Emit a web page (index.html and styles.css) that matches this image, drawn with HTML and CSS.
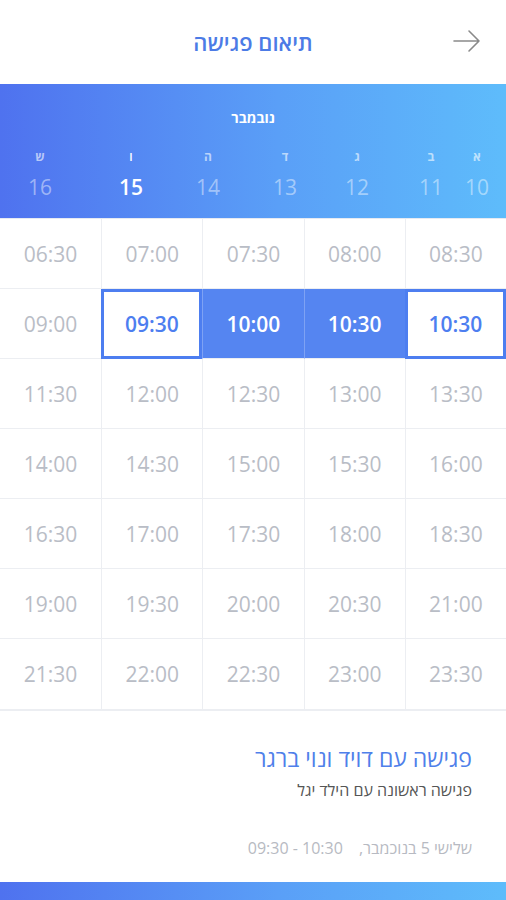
FILE: index.html
```html
<!DOCTYPE html>
<html lang="he" dir="rtl">
<head>
    <meta charset="UTF-8">
    <meta name="viewport" content="width=device-width, initial-scale=1.0">
    <title>תיאום פגישה</title>
    <link rel="stylesheet" href="styles.css">
</head>
<body>
    <div class="screen">
        <header class="top-bar">
            <button class="back-button" aria-label="חזרה">
                <svg width="30" height="24" viewBox="0 0 30 24">
                    <path d="M2 12 H27 M17 2 L27 12 L17 22" fill="none" stroke="#8a8a8a" stroke-width="1.6" stroke-linecap="round" stroke-linejoin="round"></path>
                </svg>
            </button>
            <h1 class="page-title">תיאום פגישה</h1>
            <span></span>
        </header>

        <section class="calendar-head">
            <div class="month">נובמבר</div>
            <div class="days">
                <div class="day"><span class="day-letter">א</span><span class="day-num">10</span></div>
                <div class="day"><span class="day-letter">ב</span><span class="day-num">11</span></div>
                <div class="day"><span class="day-letter">ג</span><span class="day-num">12</span></div>
                <div class="day"><span class="day-letter">ד</span><span class="day-num">13</span></div>
                <div class="day"><span class="day-letter">ה</span><span class="day-num">14</span></div>
                <div class="day active"><span class="day-letter">ו</span><span class="day-num">15</span></div>
                <div class="day"><span class="day-letter">ש</span><span class="day-num">16</span></div>
            </div>
        </section>

        <section class="slots" dir="ltr">
            <div class="slot">06:30</div>
            <div class="slot">07:00</div>
            <div class="slot">07:30</div>
            <div class="slot">08:00</div>
            <div class="slot">08:30</div>

            <div class="slot">09:00</div>
            <div class="slot edge">09:30</div>
            <div class="slot picked">10:00</div>
            <div class="slot picked">10:30</div>
            <div class="slot edge">10:30</div>

            <div class="slot">11:30</div>
            <div class="slot">12:00</div>
            <div class="slot">12:30</div>
            <div class="slot">13:00</div>
            <div class="slot">13:30</div>

            <div class="slot">14:00</div>
            <div class="slot">14:30</div>
            <div class="slot">15:00</div>
            <div class="slot">15:30</div>
            <div class="slot">16:00</div>

            <div class="slot">16:30</div>
            <div class="slot">17:00</div>
            <div class="slot">17:30</div>
            <div class="slot">18:00</div>
            <div class="slot">18:30</div>

            <div class="slot">19:00</div>
            <div class="slot">19:30</div>
            <div class="slot">20:00</div>
            <div class="slot">20:30</div>
            <div class="slot">21:00</div>

            <div class="slot">21:30</div>
            <div class="slot">22:00</div>
            <div class="slot">22:30</div>
            <div class="slot">23:00</div>
            <div class="slot">23:30</div>
        </section>

        <section class="summary">
            <h2 class="summary-title">פגישה עם דויד ונוי ברגר</h2>
            <p class="summary-sub">פגישה ראשונה עם הילד יגל</p>
            <p class="summary-date">שלישי 5 בנוכמבר, <span class="summary-time" dir="ltr">09:30 - 10:30</span></p>
        </section>

        <div class="bottom-bar"></div>
    </div>
</body>
</html>
```

FILE: styles.css
```css
* {
    box-sizing: border-box;
}

body {
    margin: 0;
    background: #fff;
    font-family: "Open Sans", "Liberation Sans", sans-serif;
}

.screen {
    width: 506px;
    height: 900px;
    display: flex;
    flex-direction: column;
    overflow: hidden;
}

.top-bar {
    height: 84px;
    display: grid;
    grid-template-columns: 1fr auto 1fr;
    align-items: center;
}

.back-button {
    justify-self: start;
    margin-right: 24px;
    margin-top: -2px;
    padding: 0;
    border: none;
    background: none;
    display: flex;
}

.page-title {
    margin: 0;
    font-size: 22px;
    font-weight: 600;
    color: #4c7be6;
}

.calendar-head {
    height: 134px;
    background: linear-gradient(90deg, #4f72ef 0%, #5a9ff7 55%, #5ebcfb 100%);
    color: #fff;
    padding-top: 24px;
}

.month {
    text-align: center;
    font-size: 14px;
    font-weight: 700;
    line-height: 20px;
}

.days {
    display: flex;
    padding-right: 9px;
    margin-top: 20px;
}

.day {
    width: 40px;
    display: flex;
    flex-direction: column;
    align-items: center;
    color: rgba(255, 255, 255, 0.45);
}

.day:nth-child(2) { margin-right: 6px; }
.day:nth-child(3) { margin-right: 34px; }
.day:nth-child(4) { margin-right: 32px; }
.day:nth-child(5) { margin-right: 37px; }
.day:nth-child(6) { margin-right: 37px; }
.day:nth-child(7) { margin-right: 51px; }

.day-letter {
    font-size: 12px;
    line-height: 18px;
    font-weight: 700;
    color: rgba(255, 255, 255, 0.6);
}

.day-num {
    font-size: 21px;
    line-height: 28px;
    margin-top: 7px;
}

.day.active,
.day.active .day-letter {
    color: #fff;
    font-weight: 600;
}

.slots {
    display: grid;
    grid-template-columns: repeat(5, 1fr);
    grid-auto-rows: 70px;
    border-top: 1px solid #e6eaf2;
    border-bottom: 2px solid #eceef2;
}

.slot {
    display: flex;
    align-items: center;
    justify-content: center;
    font-size: 21px;
    color: #b9bdc6;
    border-left: 1px solid #eceef2;
    border-bottom: 1px solid #eceef2;
}

.slot:nth-child(5n + 1) {
    border-left: none;
}

.slot:nth-last-child(-n + 5) {
    border-bottom: none;
}

.slot.edge {
    border: 3px solid #4d7ef0;
    color: #4d7ef0;
    font-weight: 600;
}

.slot.picked {
    background: #5585f1;
    color: #fff;
    font-weight: 600;
    border-left-color: #7ea2f4;
}

.summary {
    flex: 1;
    padding: 31px 34px 0;
}

.summary-title {
    margin: 0;
    font-size: 23px;
    font-weight: 500;
    color: #4f80ea;
    line-height: 32px;
}

.summary-sub {
    margin: 5px 0 0;
    font-size: 16px;
    color: #555;
}

.summary-date {
    margin: 36px 0 0;
    font-size: 16px;
    color: #b7bac2;
}

.summary-time {
    margin-right: 12px;
}

.bottom-bar {
    height: 18px;
    background: linear-gradient(90deg, #4f72ef 0%, #5a9ff7 55%, #5ebcfb 100%);
}
```
